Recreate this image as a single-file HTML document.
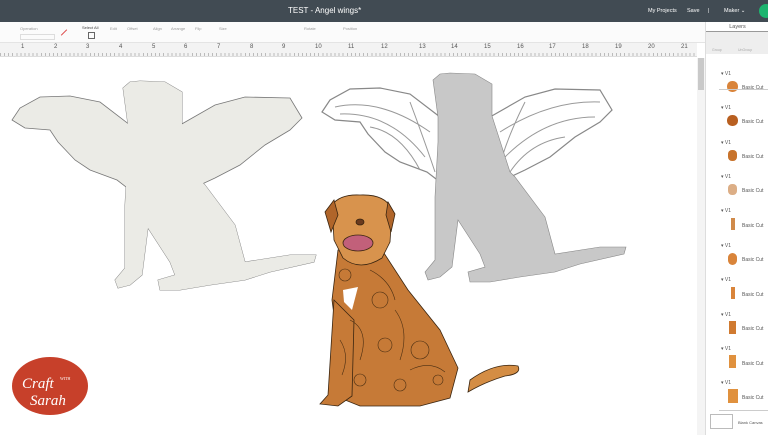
<!DOCTYPE html>
<html><head><meta charset="utf-8"><style>
*{margin:0;padding:0;box-sizing:border-box}
body{width:768px;height:435px;overflow:hidden;background:#fff;font-family:"Liberation Sans",sans-serif;position:relative}
.top{position:absolute;left:0;top:0;width:768px;height:22px;background:#414b53;color:#fff}
.tool{position:absolute;left:0;top:22px;width:705px;height:21px;background:#fbfbfb;border-bottom:1px solid #e4e4e4;font-size:4px;color:#999}
.ruler{position:absolute;left:0;top:43px;width:697px;height:14px;background:#f3f3f3;border-bottom:1px solid #ddd}
.ruler span{position:absolute;top:1px;font-size:6px;color:#555}
.panel{position:absolute;left:705px;top:22px;width:63px;height:413px;background:#fff;border-left:1px solid #ddd}
.sb{position:absolute;left:697px;top:58px;width:8px;height:377px;background:#f4f4f4}
</style></head><body>
<div class="top">
<div style="position:absolute;left:288px;top:6px;font-size:8px">TEST - Angel wings*</div>
<div style="position:absolute;left:648px;top:8px;font-size:5.5px">My Projects</div>
<div style="position:absolute;left:687px;top:8px;font-size:5.5px">Save</div>
<div style="position:absolute;left:708px;top:8px;font-size:5.5px">|</div>
<div style="position:absolute;left:724px;top:8px;font-size:5.5px">Maker ⌄</div>
<div style="position:absolute;left:759px;top:4px;width:14px;height:14px;border-radius:7px;background:#1db46f"></div>
</div>
<div class="tool">
<span style="position:absolute;left:20px;top:4px">Operation</span>
<span style="position:absolute;left:20px;top:12px;width:35px;height:6px;border:1px solid #ddd"></span>
<span style="position:absolute;left:60px;top:10px;width:8px;height:1px;background:#d44;transform:rotate(-45deg)"></span>
<span style="position:absolute;left:82px;top:3px;color:#444">Select All</span>
<span style="position:absolute;left:88px;top:10px;width:7px;height:7px;border:1px solid #666"></span>
<span style="position:absolute;left:110px;top:4px">Edit</span><span style="position:absolute;left:127px;top:4px">Offset</span>
<span style="position:absolute;left:153px;top:4px">Align</span><span style="position:absolute;left:171px;top:4px">Arrange</span><span style="position:absolute;left:195px;top:4px">Flip</span>
<span style="position:absolute;left:219px;top:4px">Size</span><span style="position:absolute;left:304px;top:4px">Rotate</span><span style="position:absolute;left:343px;top:4px">Position</span>
</div>
<div class="ruler">
<span style="left:21px">1</span><span style="left:54px">2</span><span style="left:86px">3</span><span style="left:119px">4</span><span style="left:152px">5</span><span style="left:184px">6</span><span style="left:217px">7</span><span style="left:250px">8</span><span style="left:282px">9</span><span style="left:315px">10</span><span style="left:348px">11</span><span style="left:381px">12</span><span style="left:419px">13</span><span style="left:451px">14</span><span style="left:484px">15</span><span style="left:517px">16</span><span style="left:549px">17</span><span style="left:582px">18</span><span style="left:615px">19</span><span style="left:648px">20</span><span style="left:681px">21</span>
<div style="position:absolute;left:0;bottom:0;width:697px;height:3px;background:repeating-linear-gradient(90deg,#bbb 0 1px,transparent 1px 4.08px)"></div>
</div>
<div class="sb"><div style="position:absolute;left:1px;top:0;width:6px;height:32px;background:#c9c9c9"></div></div>
<svg style="position:absolute;left:0;top:58px" width="697" height="377" viewBox="0 58 697 377">
<defs>
<path id="wl" d="M130,125 L100,102 L70,96 L40,97 L20,108 L12,120 L25,128 L50,130 L58,142 L75,160 L90,170 L117,180 L130,190Z"/>
<path id="wr" d="M180,125 L215,105 L245,97 L290,98 L302,118 L290,130 L265,145 L240,165 L215,178 L200,185 L180,190Z"/>
<path id="bd" d="M140,81 L165,82 L182,92 L182,124 L200,180 L205,185 L235,225 L245,262 L290,255 L316,255 L314,262 L270,272 L245,280 L210,285 L180,290 L160,290 L158,280 L175,275 L170,262 L148,228 L142,275 L130,285 L118,288 L115,280 L125,268 L125,205 L128,150 L128,125 L123,88 L130,82Z"/>
</defs>
<use href="#bd" fill="#ebebe6" stroke="#777" stroke-width="0.8"/>
<g fill="#ebebe6" stroke="#777" stroke-width="0.8"><use href="#wl"/><use href="#wr"/></g>
<use href="#bd" fill="#ebebe6" stroke="none"/>
<g transform="translate(310,-8)">
<g fill="#fff" stroke="#888" stroke-width="1.2"><use href="#wl"/><use href="#wr"/></g>
<g fill="none" stroke="#999" stroke-width="1"><path d="M25,115 Q70,105 120,140 M30,122 Q80,120 115,165 M60,135 Q90,140 110,178 M100,110 Q115,150 125,180 M290,110 Q240,108 190,140 M285,125 Q235,125 195,165 M255,145 Q220,150 200,180 M215,110 Q195,150 188,180"/></g>
<use href="#bd" fill="#c8c8c8" stroke="#888" stroke-width="0.6"/>
</g>
<!-- colored dog -->
<g stroke="#3a2510" stroke-width="0.8">
<path d="M470,380 Q495,362 518,366 Q522,374 505,376 Q485,382 468,392Z" fill="#d48d44"/>
<path d="M338,250 L382,250 L408,290 L440,330 L458,368 L450,398 L420,406 L360,406 L345,400 L340,360 L332,300Z" fill="#c67a37"/>
<path d="M334,300 L328,395 L320,404 L338,406 L352,396 L354,320Z" fill="#c67a37"/>
<path d="M332,205 Q340,194 360,195 Q386,194 392,210 L390,242 L382,258 Q360,272 343,258 L334,240Z" fill="#d8934d"/>
<path d="M334,200 L325,212 L331,232 L338,215Z M388,202 L395,214 L391,232 L386,215Z" fill="#b0652a"/>
<ellipse cx="358" cy="243" rx="15" ry="8" fill="#c2607a"/>
<ellipse cx="360" cy="222" rx="4" ry="3" fill="#6b3a1e"/>
</g>
<g fill="none" stroke="#4a2e12" stroke-width="0.6">
<circle cx="380" cy="300" r="8"/><circle cx="420" cy="350" r="9"/><circle cx="385" cy="345" r="7"/><circle cx="345" cy="275" r="6"/><circle cx="400" cy="385" r="6"/><circle cx="438" cy="380" r="5"/><circle cx="360" cy="380" r="6"/>
<path d="M350,320 Q370,330 360,360 M395,310 Q410,330 400,360 M410,370 Q430,360 445,372 M340,340 Q350,355 342,375 M370,270 Q390,280 395,300"/>
</g>
<path d="M343,290 L358,287 L352,310 L344,302Z" fill="#fff"/>
<!-- logo -->
<ellipse cx="50" cy="386" rx="38" ry="29" fill="#c7402a"/>
<text x="22" y="388" fill="#fff" font-family="Liberation Serif,serif" font-style="italic" font-size="15">Craft</text>
<text x="60" y="380" fill="#fff" font-family="Liberation Serif,serif" font-size="4">WITH</text>
<text x="30" y="405" fill="#fff" font-family="Liberation Serif,serif" font-style="italic" font-size="15">Sarah</text>
</svg>
<div class="panel">
<div style="position:absolute;left:0;top:0;width:63px;height:10px;font-size:5.5px;color:#555;text-align:center;padding-top:2px;border-bottom:1px solid #999">Layers</div>
<div style="position:absolute;left:0;top:10px;width:63px;height:22px;background:#eee;font-size:3.5px;color:#aaa"><span style="position:absolute;left:6px;top:16px">Group</span><span style="position:absolute;left:32px;top:16px">UnGroup</span></div>
</div>
<div style="position:absolute;left:705px;top:55px;width:63px;height:380px;font-size:5px;color:#555">
<div style="position:absolute;left:16px;top:16px">▾ V1</div><div style="position:absolute;left:22px;top:26px;width:11px;height:11px;border-radius:5px;background:#d9843a"></div><div style="position:absolute;left:37px;top:30px">Basic Cut</div>
<div style="position:absolute;left:16px;top:50px">▾ V1</div><div style="position:absolute;left:22px;top:60px;width:11px;height:11px;border-radius:5px;background:#b85f20"></div><div style="position:absolute;left:37px;top:64px">Basic Cut</div>
<div style="position:absolute;left:16px;top:85px">▾ V1</div><div style="position:absolute;left:23px;top:95px;width:9px;height:11px;border-radius:4px;background:#c8732c"></div><div style="position:absolute;left:37px;top:99px">Basic Cut</div>
<div style="position:absolute;left:16px;top:119px">▾ V1</div><div style="position:absolute;left:23px;top:129px;width:9px;height:11px;border-radius:4px;background:#dcae86"></div><div style="position:absolute;left:37px;top:133px">Basic Cut</div>
<div style="position:absolute;left:16px;top:153px">▾ V1</div><div style="position:absolute;left:26px;top:163px;width:4px;height:12px;background:#d08a4a"></div><div style="position:absolute;left:37px;top:168px">Basic Cut</div>
<div style="position:absolute;left:16px;top:188px">▾ V1</div><div style="position:absolute;left:23px;top:198px;width:9px;height:12px;border-radius:5px;background:#d9843a"></div><div style="position:absolute;left:37px;top:202px">Basic Cut</div>
<div style="position:absolute;left:16px;top:222px">▾ V1</div><div style="position:absolute;left:26px;top:232px;width:4px;height:12px;background:#d9843a"></div><div style="position:absolute;left:37px;top:237px">Basic Cut</div>
<div style="position:absolute;left:16px;top:257px">▾ V1</div><div style="position:absolute;left:24px;top:266px;width:7px;height:13px;background:#d07a30"></div><div style="position:absolute;left:37px;top:271px">Basic Cut</div>
<div style="position:absolute;left:16px;top:291px">▾ V1</div><div style="position:absolute;left:24px;top:300px;width:7px;height:13px;background:#e0913e"></div><div style="position:absolute;left:37px;top:306px">Basic Cut</div>
<div style="position:absolute;left:16px;top:325px">▾ V1</div><div style="position:absolute;left:23px;top:334px;width:10px;height:14px;background:#e0913e"></div><div style="position:absolute;left:37px;top:340px">Basic Cut</div>
<div style="position:absolute;left:14px;top:34px;width:49px;border-top:1px solid #ccc"></div>
<div style="position:absolute;left:14px;top:355px;width:49px;border-top:1px solid #ccc"></div>
<div style="position:absolute;left:5px;top:359px;width:23px;height:15px;border:1px solid #bbb;background:#fff"></div>
<div style="position:absolute;left:33px;top:365px;font-size:4px">Blank Canvas</div>
</div>
</body></html>
